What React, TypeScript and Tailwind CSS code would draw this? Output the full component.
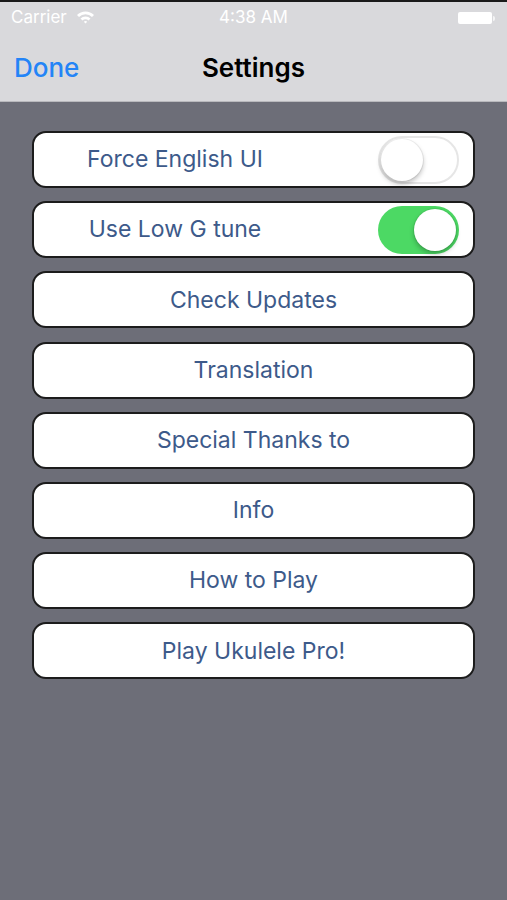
import type { ReactNode } from "react";

const font = { fontFamily: "Inter, 'Noto Sans', sans-serif" };

function Toggle({ on }: { on: boolean }) {
  return (
    <div
      className={
        on
          ? "flex h-[48px] w-[81px] items-center justify-end rounded-full bg-[#4cd964] p-[3px]"
          : "flex h-[48px] w-[81px] items-center justify-start rounded-full border-[2px] border-[#e6e6e6] bg-white p-[1px]"
      }
    >
      <div className="h-[42px] w-[42px] rounded-full bg-white shadow-[0_3px_5px_rgba(0,0,0,0.25),0_0_0_1px_rgba(0,0,0,0.06)]" />
    </div>
  );
}

function Row({ children }: { children: ReactNode }) {
  return (
    <div className="flex h-[57px] items-center rounded-[14px] border-[2px] border-[#1c1c1c] bg-white">
      {children}
    </div>
  );
}

function SwitchRow({ label, on }: { label: string; on: boolean }) {
  return (
    <Row>
      <div className="flex w-[282px] justify-center text-[23px] text-[#3d5a8a]">{label}</div>
      <div className="ml-auto mr-[14px]">
        <Toggle on={on} />
      </div>
    </Row>
  );
}

function ButtonRow({ label }: { label: string }) {
  return (
    <Row>
      <div className="w-full text-center text-[23px] text-[#3d5a8a]">{label}</div>
    </Row>
  );
}

export default function App() {
  const buttons = ["Check Updates", "Translation", "Special Thanks to", "Info", "How to Play", "Play Ukulele Pro!"];
  return (
    <div className="flex h-[900px] w-[507px] flex-col bg-[#6d6e78]" style={font}>
      <div className="h-[2px] bg-[#1a1a1a]" />
      <header className="border-b border-[#b9b9bd] bg-[#d9d9dc]">
        <div className="relative flex h-[32px] items-center px-[11px] text-[17px] text-white">
          <span>Carrier</span>
          <svg className="ml-[9px] mt-[-3px]" width="19" height="14" viewBox="0 0 19 14">
            <path d="M1 5 A12 12 0 0 1 18 5 L16 7 A9 9 0 0 0 3 7 Z" fill="white" />
            <path d="M4.5 8.5 A7 7 0 0 1 14.5 8.5 L12.5 10.5 A4.2 4.2 0 0 0 6.5 10.5 Z" fill="white" />
            <path d="M7.8 11.8 A2.5 2.5 0 0 1 11.2 11.8 L9.5 13.5 Z" fill="white" />
          </svg>
          <span className="absolute left-0 right-0 text-center">4:38 AM</span>
          <div className="ml-auto mr-[1px] flex items-center">
            <div className="h-[12px] w-[34px] rounded-[2px] bg-white" />
            <div className="ml-[1px] h-[5px] w-[2px] rounded-r-sm bg-white/70" />
          </div>
        </div>
        <div className="relative flex h-[67px] items-center px-[14px]">
          <span className="text-[26px] font-medium text-[#2384f7]">Done</span>
          <span className="absolute left-0 right-0 text-center text-[26px] font-semibold text-black">Settings</span>
        </div>
      </header>
      <div className="flex flex-col gap-[13.2px] px-[32px] pt-[29px]">
        <SwitchRow label="Force English UI" on={false} />
        <SwitchRow label="Use Low G tune" on={true} />
        {buttons.map((b) => (
          <ButtonRow key={b} label={b} />
        ))}
      </div>
    </div>
  );
}
